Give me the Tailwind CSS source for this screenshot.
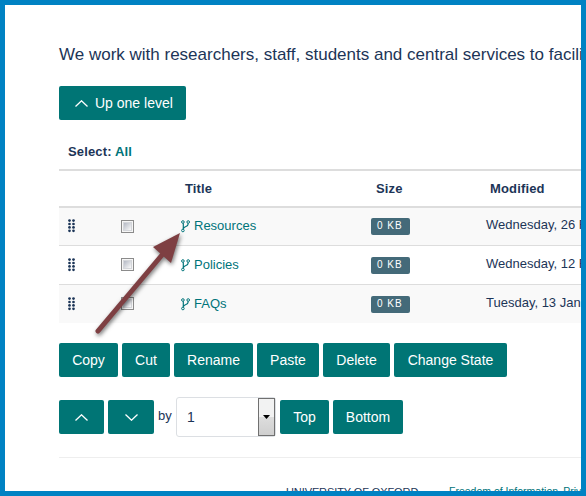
<!DOCTYPE html>
<html lang="en">
<head>
<meta charset="utf-8">
<title>Folder contents</title>
<script src="https://cdn.jsdelivr.net/npm/@tailwindcss/browser@4"></script>
</head>
<body class="h-[496px] w-[586px] overflow-hidden bg-white font-['Liberation_Sans',Arial,sans-serif] text-[#1c3557]">
<svg class="absolute h-0 w-0">
  <defs>
    <linearGradient id="cb" x1="0" y1="0" x2="1" y2="1"><stop offset="0" stop-color="#b4b9c4"/><stop offset="1" stop-color="#fafafa"/></linearGradient>
    <symbol id="check" viewBox="0 0 13 13"><rect x=".5" y=".5" width="12" height="12" fill="#f6f6f6" stroke="#8b8b8b"/><rect x="2" y="2" width="9" height="9" fill="#d4d6da"/><rect x="3" y="3" width="7" height="7" fill="url(#cb)"/></symbol>
    <symbol id="grip" viewBox="0 0 7 14"><g fill="#1c3557"><circle cx="1.5" cy="1.6" r="1.35"/><circle cx="5.5" cy="1.6" r="1.35"/><circle cx="1.5" cy="5" r="1.35"/><circle cx="5.5" cy="5" r="1.35"/><circle cx="1.5" cy="8.4" r="1.35"/><circle cx="5.5" cy="8.4" r="1.35"/><circle cx="1.5" cy="11.8" r="1.35"/><circle cx="5.5" cy="11.8" r="1.35"/></g></symbol>
    <symbol id="fork" viewBox="0 0 9 13"><g fill="none" stroke="#00747a" stroke-width="1"><circle cx="1.9" cy="2" r="1.3"/><circle cx="7.2" cy="2" r="1.3"/><circle cx="1.9" cy="10.5" r="1.3"/><path stroke-width="1.2" d="M2.3 3.3v5.9M7 3.3v1.2C7 7 3.2 6 2.6 8.4"/></g></symbol>
  </defs>
</svg>
<div class="relative flex h-[496px] w-[586px] flex-col overflow-hidden border-5 border-[#0082c3] pl-[54px]">
  <p class="mt-[39px] h-[22px] shrink-0 whitespace-nowrap text-[17px] leading-[22px]">We work with researchers, staff, students and central services to facilitate</p>
  <button class="mt-5 flex h-[34px] w-[127px] shrink-0 items-center rounded-[2px] bg-[#007575] pl-4 text-sm text-white"><svg class="mr-[7px] h-[7px] w-[13px]" viewBox="0 0 13 7" fill="none" stroke="white" stroke-width="1.3"><path d="M.5 6.5l6-5.7 6 5.7"/></svg><span class="whitespace-nowrap">Up one level</span></button>
  <div class="mt-[22px] h-[27px] shrink-0 pl-[9px] text-[13px] font-bold leading-[19px] tracking-[0.15px]">Select: <a class="text-[#00747a]">All</a></div>

  <div class="shrink-0 whitespace-nowrap border-t-2 border-[#dddddd] text-[13px]">
    <div class="grid h-[37px] grid-cols-[122px_190px_115px_1fr] border-b-2 border-[#dddddd] font-bold leading-[36px] tracking-[0.15px]">
      <span></span><span class="pl-1">Title</span><span class="pl-[5px]">Size</span><span class="pl-1">Modified</span>
    </div>
    <div class="grid h-[38px] grid-cols-[9px_53px_60px_190px_115px_1fr] border-b border-[#dddddd] bg-[#f9f9f9]">
      <span></span><svg class="mt-[11px] h-[14px] w-[7px]"><use href="#grip"/></svg><svg class="mt-3 h-[13px] w-[13px]"><use href="#check"/></svg>
      <a class="flex h-[36px] items-center text-[#00747a]"><svg class="mr-1 h-[13px] w-[9px]"><use href="#fork"/></svg><span>Resources</span></a>
      <span class="mt-[10px] h-[17px] w-[39px] rounded-[2px] bg-[#446a79] pl-[6px] text-[10px] leading-[16px] tracking-[1px] text-white">0 KB</span><span class="leading-[33px]">Wednesday, 26 February</span>
    </div>
    <div class="grid h-[39px] grid-cols-[9px_53px_60px_190px_115px_1fr] border-b border-[#dddddd] bg-white">
      <span></span><svg class="mt-3 h-[14px] w-[7px]"><use href="#grip"/></svg><svg class="mt-3 h-[13px] w-[13px]"><use href="#check"/></svg>
      <a class="flex h-[38px] items-center text-[#00747a]"><svg class="mr-1 h-[13px] w-[9px]"><use href="#fork"/></svg><span>Policies</span></a>
      <span class="mt-[11px] h-[17px] w-[39px] rounded-[2px] bg-[#446a79] pl-[6px] text-[10px] leading-[16px] tracking-[1px] text-white">0 KB</span><span class="leading-[35px]">Wednesday, 12 February</span>
    </div>
    <div class="grid h-[38px] grid-cols-[9px_53px_60px_190px_115px_1fr] bg-[#f9f9f9]">
      <span></span><svg class="mt-3 h-[14px] w-[7px]"><use href="#grip"/></svg><svg class="mt-3 h-[13px] w-[13px]"><use href="#check"/></svg>
      <a class="flex h-[38px] items-center text-[#00747a]"><svg class="mr-1 h-[13px] w-[9px]"><use href="#fork"/></svg><span>FAQs</span></a>
      <span class="mt-[11px] h-[17px] w-[39px] rounded-[2px] bg-[#446a79] pl-[6px] text-[10px] leading-[16px] tracking-[1px] text-white">0 KB</span><span class="leading-[35px]">Tuesday, 13 January</span>
    </div>
  </div>

  <div class="mt-5 flex h-[34px] shrink-0 gap-1 whitespace-nowrap text-sm text-white">
    <button class="w-[59px] rounded-[2px] bg-[#007575]">Copy</button><button class="w-[48px] rounded-[2px] bg-[#007575]">Cut</button><button class="w-[79px] rounded-[2px] bg-[#007575]">Rename</button><button class="w-[62px] rounded-[2px] bg-[#007575]">Paste</button><button class="w-[67px] rounded-[2px] bg-[#007575]">Delete</button><button class="w-[113px] rounded-[2px] bg-[#007575]">Change State</button>
  </div>

  <div class="mt-5 flex h-[40px] shrink-0 items-center text-sm text-white">
    <button class="mr-1 flex h-[34px] w-[45px] items-center justify-center rounded-[2px] bg-[#007575]"><svg class="h-[7px] w-[13px]" viewBox="0 0 13 7" fill="none" stroke="white" stroke-width="1.3"><path d="M.5 6.5l6-5.7 6 5.7"/></svg></button>
    <button class="mr-1 flex h-[34px] w-[46px] items-center justify-center rounded-[2px] bg-[#007575]"><svg class="h-[7px] w-[13px]" viewBox="0 0 13 7" fill="none" stroke="white" stroke-width="1.3"><path d="M.5 .5l6 5.7 6-5.7"/></svg></button>
    <span class="w-[18px] pb-[2px] text-[13px] text-[#1c3557]">by</span>
    <div class="mr-1 flex h-[40px] w-[100px] items-center justify-between rounded-[3px] border border-[#dcdfe3] bg-white pl-[10px] text-[#1c3557]"><span>1</span><span class="flex h-[38px] w-[17px] items-center justify-center border border-[#707070] bg-linear-to-b from-[#f2f2f2] from-50% via-[#dddddd] via-50% to-[#cfcfcf]"><svg class="h-1 w-[7px]" viewBox="0 0 7 4"><path d="M0 0h7L3.5 4z" fill="#000"/></svg></span></div>
    <button class="mr-1 h-[34px] w-[49px] rounded-[2px] bg-[#007575]">Top</button><button class="h-[34px] w-[70px] rounded-[2px] bg-[#007575]">Bottom</button>
  </div>

  <div class="mt-5 flex h-[60px] shrink-0 whitespace-nowrap border-t border-[#eeeeee] pt-[26px] leading-[14px]">
    <span class="ml-[227px] w-[163px] shrink-0 pt-px text-[11px] tracking-[-0.1px]">UNIVERSITY OF OXFORD</span><span class="shrink-0 text-[10.5px] text-[#00747a]">Freedom of Information</span><span class="ml-[5px] text-[10.5px] text-[#00747a]">Privacy</span>
  </div>

  <svg class="pointer-events-none absolute left-[80px] top-[220px] h-[120px] w-[110px] drop-shadow-[1px_2px_2px_rgba(0,0,0,0.55)]" viewBox="85 225 110 120">
    <path d="M98 331L162 255" stroke="#7e3f42" stroke-width="5" stroke-linecap="round"/><path d="M180 233L153 247L171 263Z" fill="#7e3f42"/>
  </svg>
</div>
</body>
</html>
